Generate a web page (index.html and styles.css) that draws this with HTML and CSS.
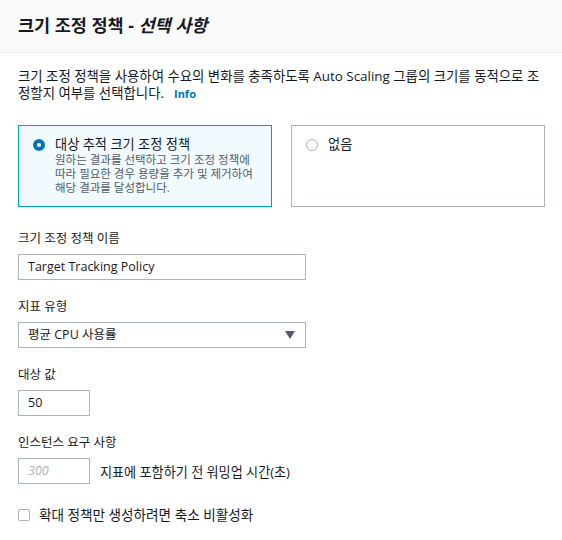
FILE: index.html
```html
<!DOCTYPE html>
<html lang="ko">
<head>
    <meta charset="UTF-8">
    <title>크기 조정 정책 - 선택 사항</title>
    <link rel="stylesheet" href="styles.css">
</head>
<body>
    <div class="panel">
        <div class="panel-header">
            <h2>크기 조정 정책 - <em>선택 사항</em></h2>
        </div>

        <div class="panel-body">
            <div class="intro">
                <span>크기 조정 정책을 사용하여 수요의 변화를 충족하도록 Auto Scaling 그룹의 크기를 동적으로 조정할지 여부를 선택합니다.</span><a class="info" href="#">Info</a>
            </div>

            <div class="tiles">
                <label class="tile selected">
                    <span class="radio checked"></span>
                    <span class="tile-text">
                        <span class="tile-title">대상 추적 크기 조정 정책</span>
                        <span class="tile-desc">원하는 결과를 선택하고 크기 조정 정책에 따라 필요한 경우 용량을 추가 및 제거하여 해당 결과를 달성합니다.</span>
                    </span>
                </label>
                <label class="tile">
                    <span class="radio"></span>
                    <span class="tile-text">
                        <span class="tile-title">없음</span>
                    </span>
                </label>
            </div>

            <div class="field">
                <div class="field-label">크기 조정 정책 이름</div>
                <div class="input wide">Target Tracking Policy</div>
            </div>

            <div class="field">
                <div class="field-label">지표 유형</div>
                <div class="input wide select">
                    <span>평균 CPU 사용률</span>
                    <span class="caret"></span>
                </div>
            </div>

            <div class="field">
                <div class="field-label">대상 값</div>
                <div class="input short">50</div>
            </div>

            <div class="field">
                <div class="field-label">인스턴스 요구 사항</div>
                <div class="inline">
                    <div class="input short placeholder">300</div>
                    <span class="suffix">지표에 포함하기 전 워밍업 시간(초)</span>
                </div>
            </div>

            <label class="check">
                <span class="box"></span>
                <span>확대 정책만 생성하려면 축소 비활성화</span>
            </label>
        </div>
    </div>
</body>
</html>
```

FILE: styles.css
```css
:root {
    --text-color: #16191f;
    --muted-color: #545b64;
    --border-color: #aab7b8;
    --link-color: #0073bb;
    --accent-color: #00a1c9;
}

body {
    margin: 0;
    background: #ffffff;
    color: var(--text-color);
    font-family: "Open Sans", "Noto Sans CJK KR", sans-serif;
    font-size: 13px;
}

.panel-header {
    background: #fafafa;
    border-bottom: 1px solid #eaeded;
    padding: 9px 18px 11px;
    height: 32px;
}

.panel-header h2 {
    margin: 0;
    font-size: 17.5px;
    font-weight: 700;
    line-height: 32px;
}

.panel-header em {
    font-style: italic;
}

.panel-body {
    padding: 15px 18px 0;
}

.intro {
    font-size: 13.4px;
    line-height: 17px;
}

.info {
    color: var(--link-color);
    font-weight: 700;
    font-size: 11px;
    text-decoration: none;
    margin-left: 10px;
}

.tiles {
    display: grid;
    grid-template-columns: 254px 254px;
    gap: 19px;
    margin-top: 23px;
}

.tile {
    display: flex;
    gap: 10px;
    height: 82px;
    padding: 10px 8px 0 14px;
    border: 1px solid var(--border-color);
    box-sizing: border-box;
}

.tile.selected {
    background: #f1faff;
    border-color: var(--accent-color);
}

.radio {
    flex: none;
    width: 12px;
    height: 12px;
    margin-top: 3px;
    border: 1px solid var(--border-color);
    border-radius: 50%;
    box-sizing: border-box;
    background: #fff;
}

.radio.checked {
    border: 4px solid var(--link-color);
}

.tile-text {
    display: flex;
    flex-direction: column;
    max-width: 200px;
}

.tile-title {
    font-size: 13.2px;
    line-height: 17px;
}

.tile-desc {
    color: var(--muted-color);
    font-size: 11.5px;
    line-height: 14px;
}

.field {
    margin-top: 23px;
}

.field + .field {
    margin-top: 18px;
}

.field-label {
    font-size: 12.5px;
    line-height: 18px;
    margin-bottom: 6px;
}

.input {
    height: 26px;
    box-sizing: border-box;
    border: 1px solid var(--border-color);
    padding: 0 9px;
    font-size: 12.5px;
    line-height: 24px;
}

.wide {
    width: 288px;
}

.short {
    width: 72px;
}

.select {
    display: flex;
    justify-content: space-between;
    align-items: center;
    padding-right: 10px;
}

.caret {
    width: 0;
    height: 0;
    border-left: 5px solid transparent;
    border-right: 5px solid transparent;
    border-top: 8px solid #545b64;
}

.placeholder {
    color: #aab7b8;
    font-style: italic;
}

.inline {
    display: flex;
    align-items: center;
    gap: 10px;
}

.suffix {
    font-size: 13.1px;
}

.check {
    display: flex;
    align-items: center;
    gap: 9px;
    margin-top: 22px;
    font-size: 13.6px;
    line-height: 18px;
}

.box {
    width: 12px;
    height: 12px;
    border: 1px solid var(--border-color);
    border-radius: 2px;
    box-sizing: border-box;
}
```
